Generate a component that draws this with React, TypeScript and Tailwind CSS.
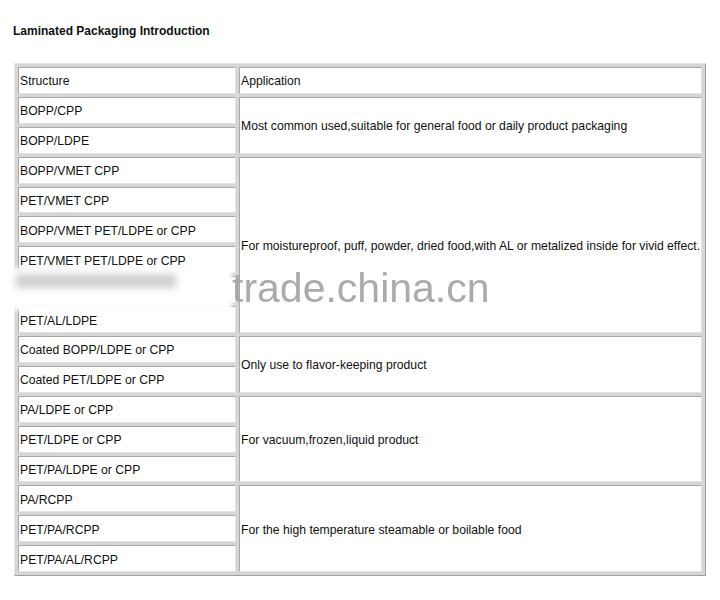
const groups: { items: string[]; app: string }[] = [
  { items: ['BOPP/CPP', 'BOPP/LDPE'], app: 'Most common used,suitable for general food or daily product packaging' },
  {
    items: ['BOPP/VMET CPP', 'PET/VMET CPP', 'BOPP/VMET PET/LDPE or CPP', 'PET/VMET PET/LDPE or CPP', '', 'PET/AL/LDPE'],
    app: 'For moistureproof, puff, powder, dried food,with AL or metalized inside for vivid effect.',
  },
  { items: ['Coated BOPP/LDPE or CPP', 'Coated PET/LDPE or CPP'], app: 'Only use to flavor-keeping product' },
  { items: ['PA/LDPE or CPP', 'PET/LDPE or CPP', 'PET/PA/LDPE or CPP'], app: 'For vacuum,frozen,liquid product' },
  { items: ['PA/RCPP', 'PET/PA/RCPP', 'PET/PA/AL/RCPP'], app: 'For the high temperature steamable or boilable food' },
]

const cell =
  'bg-white border border-t-[#a9a9a9] border-l-[#a9a9a9] border-r-[#e2e2e2] border-b-[#e2e2e2] pl-[1px] pr-0 pt-[2px] pb-0 h-[26.9px] whitespace-nowrap text-left align-middle font-normal'

export default function App() {
  return (
    <div className="w-[720px] h-[600px] bg-white relative text-[#111] font-['Liberation_Sans',Arial,sans-serif] text-[12.2px] leading-[14px]">
      <div className="pt-[23px] pl-[13px] font-bold text-[12px] leading-[16px]">Laminated Packaging Introduction</div>

      <table className="ml-[14px] mt-[24px] w-[692px] border border-t-[#e6e6e6] border-l-[#e6e6e6] border-r-[#a0a0a0] border-b-[#a0a0a0] bg-[#d6d6d6] border-separate border-spacing-[3px] table-fixed">
        <colgroup>
          <col className="w-[218px]" />
          <col />
        </colgroup>
        <tbody>
          <tr>
            <td className={cell}>Structure</td>
            <td className={cell}>Application</td>
          </tr>
          {groups.map((g) =>
            g.items.map((it, i) => (
              <tr key={g.app + i}>
                <td className={cell}>{it}</td>
                {i === 0 && (
                  <td className={cell} rowSpan={g.items.length}>
                    {g.app}
                  </td>
                )}
              </tr>
            ))
          )}
        </tbody>
      </table>

      {/* watermark over the table */}
      <div className="absolute left-0 top-[268px] w-[232px] h-[42px] bg-white blur-[2px]">
        <div className="absolute left-[16px] top-[6px] w-[160px] h-[14px] bg-[#a0a0a0] opacity-50 blur-[3px]" />
      </div>
      <div className="absolute left-[232px] top-[265px] text-[41px] leading-[46px] text-[#a3a3a3] opacity-90 font-['Liberation_Sans',Arial,sans-serif]">
        trade.china.cn
      </div>
    </div>
  )
}
